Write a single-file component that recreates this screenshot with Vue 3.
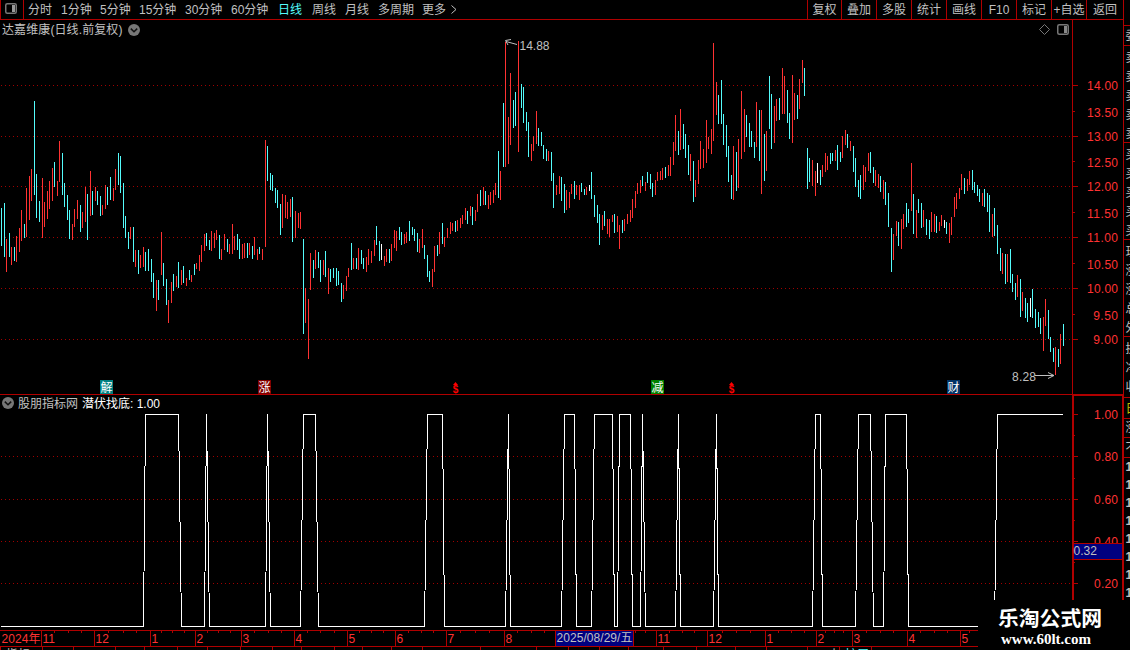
<template>
  <div class="terminal">
    <div class="main">
      <nav class="toolbar">
        <button class="layout-button">
          <svg width="12" height="11" viewBox="0 0 12 11">
            <rect x="0.75" y="0.75" width="10.5" height="9.5" rx="1.5" fill="none" stroke="#777" stroke-width="1.5" />
            <rect x="7" y="2" width="3" height="7" fill="#999" />
          </svg>
        </button>
        <div class="periods">
          <span v-for="p in periods" :key="p" :class="{ active: p === activePeriod }">{{ p }}</span>
          <svg width="8" height="10" viewBox="0 0 8 10"><path d="M1.5 0.5L6 4.5L1.5 8.5" fill="none" stroke="#c0c0c0" /></svg>
        </div>
        <div class="actions">
          <span v-for="a in actions" :key="a">{{ a }}</span>
        </div>
      </nav>

      <section class="panel price-panel">
        <svg class="chart" width="1124" height="375" viewBox="0 20 1124 375">
          <g class="crisp">
            <path v-for="g in priceGrid" :key="g.y" :d="`M1 ${g.y + 0.5}H1071`" class="grid" />
            <path :d="barPath('r')" class="up" />
            <path :d="barPath('c')" class="down" />
            <path :d="barPath('w')" class="flat" />
            <path d="M1072.5 20V395M1123.5 20V395M0 394.5H1124" class="frame" />
            <path v-for="g in priceGrid" :key="'t' + g.y" :d="`M1073 ${g.y + 0.5}h5`" class="frame" />
            <path v-for="y in [111, 161, 212, 263, 314]" :key="y" :d="`M1073 ${y + 0.5}h2`" class="frame" />
          </g>
          <text v-for="l in priceLabels" :key="l.text" x="1118" :y="l.y" class="axis-text" text-anchor="end" :textLength="l.text.length * 6.2">{{ l.text }}</text>

          <path d="M517 44.5L506 41.5M511 39.5L505.5 40.5L508 45" class="pointer" />
          <text x="519.5" y="50" class="note" textLength="30">14.88</text>
          <path d="M1035 375.5H1054M1048 372.5L1054 375.5L1048 378.5" class="pointer" />
          <text x="1012" y="381" class="note" textLength="24">8.28</text>

          <g v-for="b in badges" :key="b.text">
            <rect :x="b.x" y="380" width="13" height="14" :fill="b.color" />
            <text :x="b.x + 0.5" y="391.5" class="badge-text">{{ b.text }}</text>
          </g>
          <g v-for="x in [455, 731]" :key="x">
            <path :d="`M${x - 2} 385h5l-2.5 -3z`" fill="#f00" />
            <text :x="x + 0.5" y="393" class="dividend">$</text>
          </g>

          <path d="M1044.5 24.5L1049.5 29.5L1044.5 34.5L1039.5 29.5Z" class="tool-icon" />
          <rect x="1057.75" y="24.75" width="10.5" height="9.5" rx="1.5" class="tool-icon bold" />
          <rect x="1064" y="26" width="3" height="7" fill="#888" />
        </svg>
        <header class="title">
          <span class="stock-name">达嘉维康(日线.前复权)</span>
          <svg width="12" height="12" viewBox="0 0 12 12">
            <circle cx="6" cy="6" r="6" fill="#777" />
            <path d="M2.8 4.6L6 7.8L9.2 4.6" fill="none" stroke="#111" stroke-width="1.5" />
          </svg>
        </header>
      </section>

      <section class="panel signal-panel">
        <svg class="chart" width="1124" height="235" viewBox="0 395 1124 235">
          <g class="crisp">
            <path v-for="y in [456, 499, 541, 583]" :key="y" :d="`M1 ${y + 0.5}H1071`" class="grid" />
            <path :d="signalPath" class="signal" />
            <path d="M1073 395V630M1123 395V630" class="frame thick" />
            <path d="M1073 395.5H1123" class="frame" />
            <path v-for="y in [414, 456, 499, 541, 583]" :key="'t' + y" :d="`M1074 ${y + 0.5}h4`" class="frame" />
            <path v-for="y in [435, 478, 520, 562]" :key="'m' + y" :d="`M1074 ${y + 0.5}h1`" class="frame" />
          </g>
          <text v-for="l in signalLabels" :key="l.text" x="1118" :y="l.y" class="axis-text" text-anchor="end" textLength="24">{{ l.text }}</text>
          <rect x="1074" y="543" width="48" height="16" fill="#000080" />
          <path d="M1074 543.5h48M1074 559.5h48" class="frame crisp" />
          <text x="1073.5" y="555" class="note" textLength="23.5">0.32</text>
        </svg>
        <header class="title signal-title">
          <svg width="12" height="12" viewBox="0 0 12 12">
            <circle cx="6" cy="6" r="6" fill="#777" />
            <path d="M2.8 4.6L6 7.8L9.2 4.6" fill="none" stroke="#111" stroke-width="1.5" />
          </svg>
          <span class="source">股朋指标网</span>
          <span class="reading">潜伏找底: 1.00</span>
        </header>
      </section>

      <footer class="time-axis">
        <svg width="1124" height="20" viewBox="0 630 1124 20">
          <g class="crisp">
            <path d="M0 630.5H1124M0 646.5H1124" class="frame" />
            <path v-for="m in months" :key="m.x" :d="`M${m.x + 0.5} 631V646`" class="frame" />
            <path v-for="x in minorTicks" :key="'m' + x" :d="`M${x + 0.5} 631v2`" class="frame" />
            <path v-for="x in footTicks" :key="'f' + x" :d="`M${x + 0.5} 647v3`" class="frame" />
          </g>
          <text x="1.5" y="643" class="axis-text" textLength="39">2024年</text>
          <text v-for="m in months" :key="'l' + m.x" :x="m.x + 1.5" y="643" class="axis-text">{{ m.label }}</text>
          <rect x="556" y="631" width="77" height="15" fill="#000080" />
          <path d="M555.5 631V646M633.5 631V646" class="frame crisp" />
          <text x="556.5" y="642" class="note" textLength="76">2025/08/29/五</text>
          <text x="6" y="658.5" class="note">指标</text>
          <text x="49" y="658.5" class="note">A</text>
          <text x="828" y="658.5" class="note">小</text>
          <text x="845" y="658.5" class="down-text">扩展</text>
        </svg>
      </footer>
    </div>

    <aside class="quotes">
      <svg width="6" height="650" viewBox="1124 0 6 650">
        <path v-for="y in [25, 45, 142, 239, 336, 397, 418, 437, 457]" :key="y" :d="`M1124 ${y + 0.5}h6`" class="frame crisp" />
        <text v-for="q in quotes" :key="q.y" x="1125.5" :y="q.y" :class="['quote', q.kind]">{{ q.text }}</text>
      </svg>
    </aside>

    <div class="watermark">
      <strong>乐淘公式网</strong>
      <span>www.60lt.com</span>
    </div>
  </div>
</template>

<script setup>
import { computed } from 'vue';

const periods = ['分时', '1分钟', '5分钟', '15分钟', '30分钟', '60分钟', '日线', '周线', '月线', '多周期', '更多'];
const activePeriod = '日线';
const actions = ['复权', '叠加', '多股', '统计', '画线', 'F10', '标记', '+自选', '返回'];

// Daily ranges: x, high, low, then r (up), c (down) or w (unchanged)
const bars = `
1,208,246c 4,203,257c 6,239,272r 9,233,257c 11,247,265r 14,247,261c 16,236,262r 19,228,252r 21,210,241r 24,224,238c
26,188,237r 29,176,220r 31,169,201r 34,101,195c 36,174,218c 39,201,222c 42,178,238r 44,202,227r 47,191,219r 49,181,209r
52,168,201r 54,162,187c 57,181,196r 59,141,182r 62,153,195c 64,183,207c 67,195,220c 69,210,239c 72,224,240r 74,209,227r
77,200,219r 80,205,232c 82,212,228r 85,187,222r 87,194,240c 90,171,216r 92,191,215c 95,187,201r 97,191,205c 100,196,216c
102,205,215r 105,185,209r 107,187,205c 110,177,200c 113,188,201r 115,169,190r 118,153,185c 120,156,193c 123,183,228c 125,216,238c
128,232,249c 130,227,239r 133,227,262c 135,250,267r 138,250,274c 140,255,268r 143,247,267r 145,252,271c 148,249,271c 151,259,282c
153,273,298c 156,280,311r 158,280,300c 161,232,275r 163,263,286c 166,279,305c 168,300,323r 171,282,303r 173,274,291c 176,276,287r
178,262,288c 181,270,285r 183,266,283c 186,278,286r 189,270,280c 191,275,282r 194,264,275c 196,263,269r 199,255,271r 201,245,262r
204,234,251r 206,233,246c 209,240,250c 211,231,251r 214,233,248r 216,230,240r 219,235,259c 221,249,260r 224,234,250r 227,239,252c
229,244,254r 232,224,254r 234,236,250r 237,234,250c 239,239,259c 242,244,259r 244,243,258r 247,243,258c 249,243,255r 252,246,259c
254,237,255r 257,249,260r 259,247,254c 262,249,260r 265,140,247r 267,146,181c 270,173,190c 272,175,191c 275,188,203c 277,190,208c
280,204,235c 282,194,228r 285,195,218r 287,202,219r 290,199,217r 292,197,242c 295,211,238r 298,213,228r 300,212,229r 303,239,334c
305,288,323r 308,299,359r 310,253,290r 313,260,278c 315,250,269r 318,252,268c 320,260,282c 323,260,275r 325,251,277c 328,268,294r
330,269,282c 333,268,278c 336,268,286c 338,271,285c 341,283,302c 343,285,299r 346,276,291r 348,268,277r 351,243,270c 353,258,269r
356,258,269c 358,248,270r 361,250,264c 363,258,269c 366,257,272r 368,249,265r 371,251,263r 374,240,256r 376,226,245c 379,241,261c
381,244,260w 384,256,266r 386,249,262r 389,249,263c 391,244,261r 394,230,248r 396,231,251r 399,227,240c 401,232,245c 404,234,244r
406,232,243r 409,221,241c 412,227,235c 414,229,241c 417,233,252c 419,239,253r 422,229,248r 424,245,259c 427,255,277c 429,271,282c
432,269,287r 434,246,272r 437,245,256c 439,232,254r 442,223,244c 444,237,247r 447,228,238r 450,222,234r 452,223,231r 455,221,232c
457,220,231r 460,218,228r 462,215,224r 465,208,220r 467,211,224c 470,206,216r 472,207,225c 475,210,221r 477,194,212r 480,190,206c
483,187,205r 485,191,205c 488,195,209r 490,192,205r 493,190,203r 495,183,195r 498,151,198c 500,171,200r 503,103,167c 505,42,167r
508,117,164r 510,73,145r 513,100,128c 515,92,126c 518,41,152r 521,84,108c 523,87,123c 526,112,131c 528,122,157c 531,144,161r
533,136,151r 536,111,144r 538,128,146c 541,132,146c 543,145,159c 546,149,161c 548,151,161r 551,152,181c 553,173,208c 556,185,195r
559,176,194r 561,177,201c 564,184,213c 566,190,210r 569,192,208r 571,184,194r 574,181,199c 576,185,195r 579,185,200r 581,183,192c
584,189,195c 586,187,195r 589,185,191w 591,172,199c 594,195,217c 597,205,223c 599,214,245c 602,215,230r 604,211,226c 607,219,234r
609,219,237r 612,215,222r 614,214,233c 617,216,232r 619,225,249r 622,220,233c 624,219,231r 627,214,224r 630,210,222r 632,199,218r
635,191,208r 637,183,194r 640,180,193r 642,176,186c 645,182,191r 647,172,183c 650,174,189c 652,183,197c 655,180,195r 657,172,181r
660,171,180r 662,168,180r 665,167,178c 668,165,176r 670,157,176r 673,142,165r 675,115,151r 678,131,155c 680,109,150r 683,124,149c
685,134,158c 688,145,175c 690,154,181r 693,161,202c 695,180,197r 698,160,184r 700,141,169r 703,149,168r 706,120,163r 708,137,149r
711,129,154r 713,43,141r 716,82,115r 718,95,124c 721,80,124c 723,114,145c 726,125,157c 728,146,182c 731,175,199c 733,146,200r
736,152,191c 738,139,188r 741,91,159r 744,109,152r 746,115,137c 749,123,147c 751,131,147c 754,142,158c 756,102,147r 759,110,161c
761,110,194r 764,134,181c 766,131,171r 769,76,129c 771,94,149c 774,106,143r 776,99,121r 779,98,120c 782,68,114r 784,76,114r
787,90,123c 789,113,139c 792,75,143r 794,93,120r 797,95,119c 799,79,109r 802,60,83r 804,68,96c 807,148,189c 809,158,182c
812,160,186r 815,171,196r 817,163,183w 820,170,185c 822,165,177r 825,153,172r 827,156,170r 830,153,164c 832,153,161c 835,150,161r
837,145,170c 840,152,162c 842,136,158r 845,130,145r 847,134,148c 850,141,151r 853,146,172c 855,158,187c 858,180,197c 860,175,199c
863,165,190r 865,167,182r 868,153,171r 870,152,173c 873,167,183c 875,170,186r 878,174,188r 880,176,192c 883,180,199r 885,182,205c
888,193,227c 891,228,272c 893,234,260r 896,221,236r 898,222,246c 901,219,249r 903,214,229r 906,203,227c 908,209,223c 911,163,211r
913,194,234c 916,210,238r 918,199,213c 921,203,228c 923,210,227r 926,219,235c 929,220,239c 931,212,232r 934,214,232r 936,216,233c
939,222,231r 941,215,226r 944,220,228w 946,222,234c 949,223,243r 951,217,235r 954,197,217r 956,193,209r 959,188,199r 961,174,190r
964,178,194c 967,179,191r 969,171,185r 972,170,190c 974,182,193c 977,185,196c 979,189,202c 982,193,206r 984,189,207c 987,193,212c
989,195,232c 992,214,237r 994,208,236c 997,225,254c 1000,248,271c 1002,253,274r 1005,254,284c 1007,254,282r 1010,249,283c 1012,274,292c
1015,283,300c 1017,275,297r 1020,279,317c 1022,292,311r 1025,298,318c 1027,303,322c 1030,298,317w 1032,289,318c 1035,309,328c 1038,312,327c
1040,318,334c 1043,317,351r 1045,299,326r 1048,310,339c 1050,337,352c 1053,348,362c 1055,347,375r 1058,349,367c 1060,334,364r 1063,324,346c
`.trim().split(/\s+/).map((item) => {
  const [x, high, low] = item.slice(0, -1).split(',').map(Number);
  return { x, high, low, kind: item.slice(-1) };
});

const barPath = (kind) =>
  bars.filter((b) => b.kind === kind).map((b) => `M${b.x + 0.5} ${b.high}V${b.low}`).join('');

const priceGrid = [85, 136, 186, 237, 288, 339].map((y) => ({ y }));
const priceLabels = [
  ['14.00', 90], ['13.50', 117], ['13.00', 141], ['12.50', 167], ['12.00', 191], ['11.50', 218],
  ['11.00', 242], ['10.50', 269], ['10.00', 293], ['9.50', 320], ['9.00', 344]
].map(([text, y]) => ({ text, y }));
const signalLabels = [['1.00', 419], ['0.80', 461], ['0.60', 504], ['0.40', 546], ['0.20', 588]]
  .map(([text, y]) => ({ text, y }));

const badges = [
  { text: '解', x: 100, color: '#008080' },
  { text: '涨', x: 258, color: '#800000' },
  { text: '减', x: 651, color: '#008000' },
  { text: '财', x: 947, color: '#003366' }
];

// Each pulse: rise start, rise end, fall start, fall end
const pulses = [
  [143, 145, 178, 181], [204, 206, 206, 209], [265, 267, 267, 270], [300, 303, 315, 318],
  [424, 427, 442, 444], [505, 508, 508, 510], [561, 564, 574, 576], [591, 594, 612, 614],
  [617, 619, 630, 632], [640, 642, 642, 645], [675, 678, 678, 680], [713, 716, 716, 718],
  [812, 815, 820, 822], [855, 858, 870, 873], [883, 885, 906, 908]
];
const signalPath = computed(() => {
  const body = pulses
    .map(([a, b, c, d]) => `H${a + 0.5}L${b + 0.5} 414.5H${c + 0.5}L${d + 0.5} 626.5`)
    .join('');
  return `M1 626.5${body}H994.5L997.5 414.5H1063`;
});

const months = [
  [41, '11'], [94, '12'], [150, '1'], [195, '2'], [241, '3'], [294, '4'], [347, '5'], [395, '6'], [446, '7'], [504, '8'],
  [656, '11'], [707, '12'], [765, '1'], [816, '2'], [852, '3'], [907, '4'], [960, '5']
].map(([x, label]) => ({ x, label }));
const minorTicks = [
  54, 68, 81, 108, 123, 136, 161, 172, 184, 207, 218, 230, 254, 268, 281, 307, 320, 334, 359, 371, 383, 408, 421, 433,
  460, 475, 489, 517, 531, 544, 635, 645, 669, 682, 694, 722, 736, 750, 778, 791, 804, 825, 834, 843, 866, 880, 893, 920, 934, 947, 969
];
const footTicks = [
  0, 42, 73, 115, 144, 177, 207, 240, 272, 301, 334, 362, 391, 422, 480, 536, 568, 599, 628, 663, 696, 735, 766, 807, 839, 871
];

const quotes = [
  ['委', 40], ['卖', 62], ['卖', 81], ['卖', 100], ['卖', 119], ['卖', 138],
  ['买', 159], ['买', 178], ['买', 197], ['买', 216], ['买', 235],
  ['现', 256], ['涨', 275], ['涨', 294], ['总', 313], ['外', 332],
  ['换', 353], ['净', 372], ['收', 391], ['日', 413, 'yellow'], ['涨', 432], ['不', 452],
  ['1', 471, 'tick'], ['1', 489, 'tick'], ['1', 507, 'tick'], ['1', 525, 'tick'],
  ['1', 543, 'tick'], ['1', 561, 'tick'], ['1', 579, 'tick'], ['1', 597, 'tick']
].map(([text, y, kind]) => ({ text, y, kind }));
</script>

<style>
body {
  background: #000;
}
</style>

<style scoped>
.terminal {
  position: relative;
  display: grid;
  grid-template-columns: 1124px 6px;
  width: 1130px;
  height: 650px;
  overflow: hidden;
  background: #000;
  color: #c0c0c0;
  font: 12px/14px "Liberation Sans", "Noto Sans CJK SC", sans-serif;
}

.main {
  display: flex;
  flex-direction: column;
}

svg {
  display: block;
}

.toolbar {
  display: flex;
  box-sizing: border-box;
  height: 20px;
  border-left: 1px solid #b00000;
  border-right: 1px solid #b00000;
  border-bottom: 1px solid #b00000;
  line-height: 20px;
  white-space: nowrap;
}

.layout-button {
  display: flex;
  align-items: flex-start;
  box-sizing: border-box;
  width: 23px;
  padding: 3px 0 0 4px;
  border: 0;
  border-right: 1px solid #b00000;
  background: none;
}

.periods {
  display: grid;
  grid-template-columns: 33px 39px 39px 46px 46px 47px 34px 33px 33px 44px 28px 8px;
  align-items: center;
  padding-left: 4px;
}

.periods .active {
  color: #54fcfc;
}

.actions {
  display: grid;
  grid-template-columns: 34px repeat(7, 35px) 37px;
  height: 19px;
  margin-left: auto;
}

.actions span {
  height: 19px;
  border-left: 1px solid #b00000;
  text-align: center;
}

.panel {
  position: relative;
}

.price-panel {
  height: 375px;
}

.signal-panel {
  height: 235px;
}

.title {
  position: absolute;
  top: 3px;
  left: 2px;
  display: flex;
  align-items: center;
  gap: 4px;
  white-space: nowrap;
}

.stock-name {
  width: 122px;
  letter-spacing: 0.1px;
}

.signal-title {
  top: 1px;
  gap: 4px;
}

.source,
.reading {
  position: relative;
  top: 1px;
}

.reading {
  color: #fff;
}

.crisp {
  shape-rendering: crispEdges;
}

.grid {
  stroke: #a00000;
  stroke-dasharray: 1 3;
}

.frame {
  fill: none;
  stroke: #b00000;
}

.thick {
  stroke-width: 2;
}

.up {
  stroke: #ff3232;
}

.down {
  stroke: #54fcfc;
}

.down-text {
  fill: #54fcfc;
}

.flat {
  stroke: #fff;
}

.signal {
  fill: none;
  stroke: #fff;
}

.axis-text {
  fill: #ff3232;
}

.note {
  fill: #c0c0c0;
}

.pointer {
  fill: none;
  stroke: #c0c0c0;
}

.badge-text {
  fill: #fff;
}

.dividend {
  fill: #f00;
  font-size: 10px;
  font-weight: bold;
  text-anchor: middle;
}

.tool-icon {
  fill: none;
  stroke: #777;
}

.bold {
  stroke-width: 1.5;
}

.quote {
  fill: #c0c0c0;
}

.yellow {
  fill: #c0c000;
}

.tick {
  font-weight: bold;
}

.watermark {
  position: absolute;
  right: 0;
  bottom: 0;
  display: flex;
  flex-direction: column;
  box-sizing: border-box;
  width: 152px;
  height: 50px;
  padding: 7px 0 0 20px;
  background: #000;
  color: #fff;
}

.watermark strong {
  font-size: 20.8px;
  line-height: 24px;
}

.watermark span {
  padding-left: 3px;
  font: bold 15px/16px "Liberation Serif", serif;
}
</style>
